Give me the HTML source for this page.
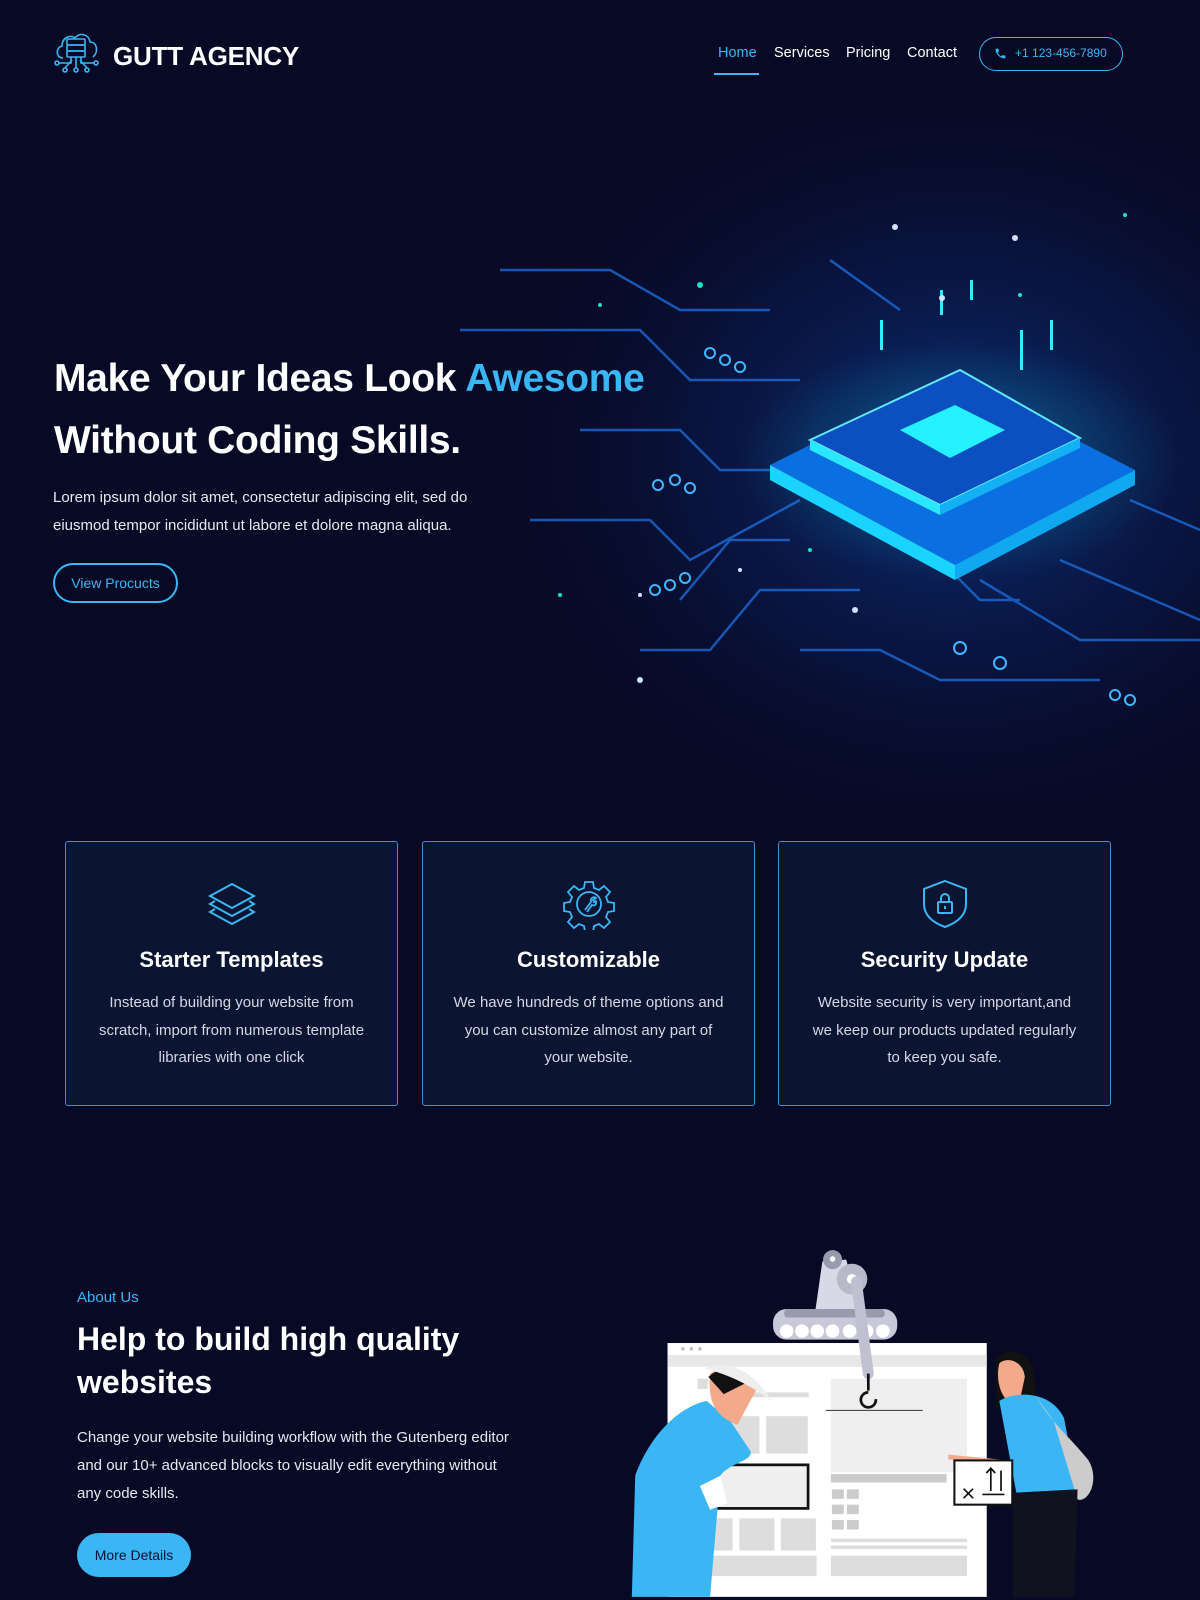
<!DOCTYPE html>
<html><head><meta charset="utf-8"><style>
*{margin:0;padding:0;box-sizing:border-box}
body{width:1200px;height:1600px;overflow:hidden;background:#080a25;font-family:"Liberation Sans",sans-serif;color:#fff;position:relative}
.abs{position:absolute}
.nav a{position:absolute;top:45px;font-size:14.5px;color:#fff;text-decoration:none}
h1{position:absolute;left:54px;top:348px;font-size:39px;line-height:62px;font-weight:700;letter-spacing:-0.3px}
.card{position:absolute;top:841px;width:333px;height:265px;border:1px solid #3f8fd0;border-radius:3px;background:#0b1431;text-align:center}
.card h3{position:absolute;top:105px;left:0;right:0;font-size:22px;font-weight:700}
.card p{position:absolute;top:147px;left:28px;right:28px;font-size:15px;line-height:27.5px;color:#d4d8e4}
.card svg{position:absolute;top:36px;left:50%;margin-left:-26px}
</style></head><body>
<svg class="abs" style="left:380px;top:120px" width="820" height="680" viewBox="0 0 820 680">
<defs>
<radialGradient id="g1" cx="0.7" cy="0.5" r="0.6"><stop offset="0" stop-color="#0b3a8a" stop-opacity="0.8"/><stop offset="0.5" stop-color="#0a1e5a" stop-opacity="0.5"/><stop offset="1" stop-color="#080a25" stop-opacity="0"/></radialGradient>
<radialGradient id="g2" cx="0.5" cy="0.5" r="0.5"><stop offset="0" stop-color="#19e6ff" stop-opacity="0.6"/><stop offset="1" stop-color="#19e6ff" stop-opacity="0"/></radialGradient>
</defs>
<rect width="820" height="680" fill="url(#g1)"/>
<g stroke="#1d6fe0" stroke-width="2.5" fill="none" opacity="0.75">
<path d="M80 210 L260 210 L310 260 L420 260"/>
<path d="M200 310 L300 310 L340 350 L440 350"/>
<path d="M150 400 L270 400 L310 440 L420 380"/>
<path d="M300 480 L350 420 L410 420"/>
<path d="M260 530 L330 530 L380 470 L480 470"/>
<path d="M420 530 L500 530 L560 560 L720 560"/>
<path d="M600 460 L700 520 L820 520"/>
<path d="M680 440 L820 500"/>
<path d="M540 420 L600 480 L640 480"/>
<path d="M120 150 L230 150 L300 190 L390 190"/>
<path d="M750 380 L820 410"/>
<path d="M450 140 L520 190"/>
</g>
<g fill="none" stroke="#3fb7ff" stroke-width="2">
<circle cx="330" cy="233" r="5"/><circle cx="345" cy="240" r="5"/><circle cx="360" cy="247" r="5"/>
<circle cx="278" cy="365" r="5"/><circle cx="295" cy="360" r="5"/><circle cx="310" cy="368" r="5"/>
<circle cx="275" cy="470" r="5"/><circle cx="290" cy="465" r="5"/><circle cx="305" cy="458" r="5"/>
<circle cx="580" cy="528" r="6"/><circle cx="620" cy="543" r="6"/>
<circle cx="735" cy="575" r="5"/><circle cx="750" cy="580" r="5"/>
</g>
<ellipse cx="580" cy="340" rx="220" ry="120" fill="url(#g2)" opacity="0.5"/>
<polygon points="390,345 570,255 755,350 575,445" fill="#0a6fe0"/>
<polygon points="390,345 575,445 575,460 390,360" fill="#1ad4ff"/>
<polygon points="575,445 755,350 755,365 575,460" fill="#10a8f0"/>
<polygon points="430,320 580,250 700,318 560,385" fill="#0b4fc0" stroke="#5fe8ff" stroke-width="2"/>
<polygon points="430,320 560,385 560,395 430,330" fill="#28e7ff"/>
<polygon points="560,385 700,318 700,328 560,395" fill="#13b0f5"/>
<polygon points="520,310 575,285 625,310 570,338" fill="#24f0ff"/>
<g fill="#36e9ff"><rect x="500" y="200" width="3" height="30"/><rect x="640" y="210" width="3" height="40"/><rect x="670" y="200" width="3" height="30"/><rect x="560" y="170" width="3" height="25"/><rect x="590" y="160" width="3" height="20"/></g>
<g fill="#cfe3ff"><circle cx="515" cy="107" r="3"/><circle cx="635" cy="118" r="3"/><circle cx="562" cy="178" r="3"/><circle cx="260" cy="475" r="2"/><circle cx="360" cy="450" r="2"/><circle cx="260" cy="560" r="3"/><circle cx="475" cy="490" r="3"/></g>
<g fill="#1ee0c0"><circle cx="320" cy="165" r="3"/><circle cx="220" cy="185" r="2"/><circle cx="180" cy="475" r="2"/><circle cx="640" cy="175" r="2"/><circle cx="745" cy="95" r="2"/><circle cx="430" cy="430" r="2"/></g>
</svg>

<svg class="abs" style="left:53px;top:30px" width="48" height="46" viewBox="0 0 48 46" fill="none" stroke="#3ab6f5" stroke-width="1.6">
<path d="M10 28 C3 28 2 18 9 16 C9 8 17 4 22 8 C26 2 36 4 37 12 C44 12 46 22 40 27"/>
<rect x="14" y="9" width="18" height="6" rx="1"/><rect x="14" y="15" width="18" height="6" rx="1"/><rect x="14" y="21" width="18" height="6" rx="1"/>
<path d="M23 27 V38 M18 27 V33 H5 M28 27 V33 H42 M19 30 L12 38 M27 30 L34 38"/>
<circle cx="4" cy="33" r="2"/><circle cx="43" cy="33" r="2"/><circle cx="12" cy="40" r="2"/><circle cx="23" cy="40" r="2"/><circle cx="34" cy="40" r="2"/>
</svg>
<div class="abs" style="left:113px;top:41px;font-size:26px;font-weight:700;letter-spacing:-0.2px">GUTT AGENCY</div>

<div class="nav">
<a style="left:718px;color:#3ab6f5">Home</a>
<div class="abs" style="left:714px;top:73px;width:45px;height:2px;background:#3ab6f5"></div>
<a style="left:774px">Services</a>
<a style="left:846px">Pricing</a>
<a style="left:907px">Contact</a>
</div>
<div class="abs" style="left:979px;top:37px;width:144px;height:34px;border:1.5px solid #3ab6f5;border-radius:17px;font-size:12px;color:#3ab6f5;line-height:31px;padding-left:35px">+1 123-456-7890</div>
<svg class="abs" style="left:994px;top:47px" width="13" height="13" viewBox="0 0 24 24"><path fill="#3ab6f5" d="M6.6 10.8c1.4 2.8 3.8 5.1 6.6 6.6l2.2-2.2c.3-.3.7-.4 1-.2 1.1.4 2.300.6 3.6.6.6 0 1 .4 1 1V20c0 .6-.4 1-1 1C10.6 21 3 13.4 3 4c0-.6.4-1 1-1h3.5c.6 0 1 .4 1 1 0 1.3.2 2.5.6 3.6.1.3 0 .7-.2 1z"/></svg>

<h1>Make Your Ideas Look <span style="color:#3ab6f5">Awesome</span><br>Without Coding Skills.</h1>
<div class="abs" style="left:53px;top:484px;font-size:15px;line-height:28px;color:#e6e8f0">Lorem ipsum dolor sit amet, consectetur adipiscing elit, sed do<br>eiusmod tempor incididunt ut labore et dolore magna aliqua.</div>
<div class="abs" style="left:53px;top:563px;width:125px;height:40px;border:2px solid #3ab6f5;border-radius:20px;font-size:14px;color:#3ab6f5;text-align:center;line-height:36px">View Procucts</div>

<div class="card" style="left:65px">
<svg width="52" height="52" viewBox="0 0 52 52" fill="none" stroke="#3ab6f5" stroke-width="2"><path d="M26 6 L48 18 L26 30 L4 18 Z"/><path d="M9 23 L4 26 L26 38 L48 26 L43 23"/><path d="M9 31 L4 34 L26 46 L48 34 L43 31"/></svg>
<h3>Starter Templates</h3><p>Instead of building your website from scratch, import from numerous template libraries with one click</p></div>
<div class="card" style="left:422px">
<svg width="52" height="52" viewBox="0 0 52 52" fill="none" stroke="#3ab6f5" stroke-width="1.8"><path d="M22 4h8l1 6 5 2 5-4 6 6-4 5 2 5 6 1v8l-6 1-2 5 4 5-6 6-5-4-5 2-1 6h-8l-1-6-5-2-5 4-6-6 4-5-2-5-6-1v-8l6-1 2-5-4-5 6-6 5 4 5-2z"/><circle cx="26" cy="26" r="12"/><path d="M22 32 L28 24 C27 20 31 18 33 20 L30 22 L31 24 L33 23 C34 27 31 28 29 27 L24 34"/></svg>
<h3>Customizable</h3><p>We have hundreds of theme options and you can customize almost any part of your website.</p></div>
<div class="card" style="left:778px">
<svg width="52" height="52" viewBox="0 0 52 52" fill="none" stroke="#3ab6f5" stroke-width="2"><path d="M26 3 L47 11 V26 C47 38 37 45 26 49 C15 45 5 38 5 26 V11 Z"/><rect x="19" y="24" width="14" height="11" rx="1"/><path d="M22 24 V20 a4 4 0 0 1 8 0 V24"/><path d="M26 28 v3"/></svg>
<h3>Security Update</h3><p>Website security is very important,and we keep our products updated regularly to keep you safe.</p></div>

<div class="abs" style="left:77px;top:1289px;font-size:15px;color:#3ab6f5">About Us</div>
<div class="abs" style="left:77px;top:1318px;font-size:32px;line-height:43px;font-weight:700">Help to build high quality<br>websites</div>
<div class="abs" style="left:77px;top:1424px;font-size:15px;line-height:28px;color:#e6e8f0">Change your website building workflow with the Gutenberg editor<br>and our 10+ advanced blocks to visually edit everything without<br>any code skills.</div>
<div class="abs" style="left:77px;top:1533px;width:114px;height:44px;background:#3ab6f5;border-radius:22px;font-size:14px;color:#0a1030;text-align:center;line-height:44px">More Details</div>

<svg class="abs" style="left:608px;top:1214px" width="490" height="386" viewBox="0 0 1440 1116">
<rect x="175" y="370" width="938" height="746" fill="#fff"/>
<rect x="175" y="405" width="938" height="35" fill="#e8e8e8"/>
<g fill="#bbb"><circle cx="220" cy="387" r="5"/><circle cx="245" cy="387" r="5"/><circle cx="270" cy="387" r="5"/></g>
<rect x="655" y="475" width="400" height="275" fill="#efefef"/>
<rect x="655" y="755" width="340" height="25" fill="#ccc"/>
<g fill="#ccc"><rect x="658" y="800" width="35" height="28"/><rect x="702" y="800" width="35" height="28"/><rect x="658" y="845" width="35" height="28"/><rect x="702" y="845" width="35" height="28"/><rect x="658" y="890" width="35" height="28"/><rect x="702" y="890" width="35" height="28"/></g>
<g fill="#ddd"><rect x="655" y="945" width="400" height="10"/><rect x="655" y="965" width="400" height="10"/><rect x="655" y="995" width="400" height="60"/><rect x="263" y="995" width="350" height="60"/><rect x="465" y="585" width="122" height="110"/><rect x="263" y="885" width="103" height="95"/><rect x="386" y="885" width="103" height="95"/><rect x="508" y="885" width="103" height="95"/><rect x="263" y="475" width="30" height="30"/><rect x="340" y="515" width="250" height="14"/><rect x="340" y="585" width="105" height="110"/></g>
<rect x="270" y="728" width="318" height="128" fill="#efefef" stroke="#111" stroke-width="8"/>
<rect x="485" y="270" width="365" height="90" rx="40" fill="#c8c8d8"/>
<g fill="#fff"><circle cx="525" cy="335" r="20"/><circle cx="570" cy="335" r="20"/><circle cx="615" cy="335" r="20"/><circle cx="660" cy="335" r="20"/><circle cx="710" cy="335" r="20"/><circle cx="760" cy="335" r="20"/><circle cx="808" cy="335" r="20"/></g>
<rect x="518" y="270" width="295" height="25" rx="10" fill="#9a9aae"/>
<path d="M630 130 L700 125 L740 270 L610 270 Z" fill="#d8d8e6"/>
<circle cx="660" cy="125" r="28" fill="#9a9aae"/><circle cx="717" cy="182" r="45" fill="#b8b8c8"/><circle cx="717" cy="182" r="15" fill="#fff"/><circle cx="660" cy="123" r="8" fill="#fff"/>
<path d="M730 190 L765 460" stroke="#c0c0d0" stroke-width="32" stroke-linecap="round"/>
<path d="M765 460 V510 M765 515 a22 22 0 1 0 22 20" stroke="#111" stroke-width="8" fill="none"/>
<path d="M640 568 H925" stroke="#333" stroke-width="3"/>
<path d="M290 540 C200 560 120 650 80 760 L70 1116 L300 1116 L330 760 C360 720 420 720 420 690 L360 600 Z" fill="#3ab6f5"/>
<path d="M300 460 C340 430 420 450 440 500 L380 610 C330 590 290 560 300 460 Z" fill="#f4a98a"/>
<path d="M295 470 C320 440 390 440 420 480 L340 520 Z" fill="#111"/>
<path d="M285 445 C320 420 420 430 480 540 C440 510 380 470 285 445 Z" fill="#eee"/>
<path d="M270 790 L330 760 L350 840 L300 860 Z" fill="#fff"/>
<path d="M1140 420 C1160 380 1240 390 1250 450 L1260 560 L1140 560 Z" fill="#111"/>
<path d="M1150 430 C1170 410 1220 420 1225 470 L1210 540 L1175 540 C1150 520 1140 470 1150 430 Z" fill="#f4a98a"/>
<path d="M1150 540 C1200 510 1300 510 1340 590 L1380 800 L1200 810 Z" fill="#3ab6f5"/>
<path d="M1260 530 C1300 600 1350 640 1400 700 C1450 750 1420 840 1380 830 L1310 600 Z" fill="#ccc"/>
<path d="M1190 810 L1380 800 L1370 1116 L1190 1116 Z" fill="#10131f"/>
<path d="M1000 705 L1160 720" stroke="#f4a98a" stroke-width="14"/>
<rect x="1018" y="715" width="170" height="130" fill="#fff" stroke="#111" stroke-width="6"/>
<path d="M1045 798 l28 28 M1073 798 l-28 28 M1125 805 V740 M1112 752 L1125 738 L1138 752 M1155 805 V745 M1100 815 H1165" stroke="#111" stroke-width="5" fill="none"/>
</svg>
</body></html>
